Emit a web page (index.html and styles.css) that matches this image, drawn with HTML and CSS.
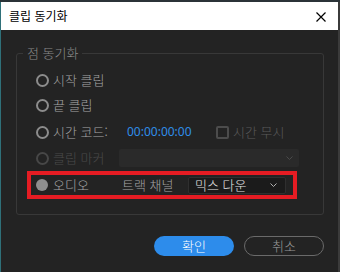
FILE: index.html
```html
<!DOCTYPE html>
<html lang="ko">
<head>
  <meta charset="UTF-8">
  <title>클립 동기화</title>
  <link rel="stylesheet" href="styles.css">
</head>
<body>
  <div class="frame">
    <div class="titlebar">
      <span class="title">클립 동기화</span>
      <svg class="close" width="10" height="10" viewBox="0 0 10 10">
        <path d="M0.5 0.5 L9.5 9.5 M9.5 0.5 L0.5 9.5" stroke="#000" stroke-width="1.2" fill="none"/>
      </svg>
    </div>

    <div class="panel">
      <fieldset class="group">
        <legend>점 동기화</legend>

        <div class="row row-first">
          <span class="radio"></span>
          <span class="label">시작 클립</span>
        </div>

        <div class="row row-end">
          <span class="radio"></span>
          <span class="label">끝 클립</span>
        </div>

        <div class="row row-time">
          <span class="radio"></span>
          <span class="label label-time">시간 코드:</span>
          <span class="timecode">00:00:00:00</span>
          <span class="checkbox"></span>
          <span class="label dim">시간 무시</span>
        </div>

        <div class="row row-marker">
          <span class="radio disabled"></span>
          <span class="label label-marker disabled">클립 마커</span>
          <div class="select select-marker">
            <svg class="chevron" width="7" height="4" viewBox="0 0 7 4">
              <polyline points="0.5,0.5 3.5,3.5 6.5,0.5" stroke="#4a4a4a" fill="none"/>
            </svg>
          </div>
        </div>

        <div class="highlight">
          <div class="row">
            <span class="radio checked"></span>
            <span class="label label-audio">오디오</span>
            <span class="label label-track">트랙 채널</span>
            <div class="select select-track">
              <span>믹스 다운</span>
              <svg class="chevron" width="7" height="4" viewBox="0 0 7 4">
                <polyline points="0.5,0.5 3.5,3.5 6.5,0.5" stroke="#b0b0b0" fill="none"/>
              </svg>
            </div>
          </div>
        </div>
      </fieldset>

      <div class="actions">
        <button class="btn btn-ok">확인</button>
        <button class="btn btn-cancel">취소</button>
      </div>
    </div>
  </div>
</body>
</html>
```

FILE: styles.css
```css
html, body {
  margin: 0;
  height: 100%;
  background-color: #2b3338;
}

body {
  font-family: "Noto Sans CJK KR", "Noto Sans", sans-serif;
  font-size: 13px;
  font-weight: 300;
  overflow: hidden;
}

.frame {
  margin-top: 2px;
  height: 270px;
  border-left: 1px solid #2f7079;
  border-right: 2px solid #3b3b3b;
  display: flex;
  flex-direction: column;
}

.titlebar {
  height: 28px;
  background-color: #fff;
  display: flex;
  align-items: center;
  justify-content: space-between;
  padding: 0 12px 0 8px;
}

.title {
  font-size: 12px;
  font-weight: 400;
  color: #000;
  line-height: 16px;
}

.close {
  margin-top: 1px;
}

.panel {
  flex: 1;
  background-color: #232323;
  padding: 15px 14px 0 15px;
}

.group {
  margin: 0;
  padding: 9px 10px 15px 10px;
  border: 1px solid #383838;
  border-radius: 3px;
  min-width: 0;
}

.group legend {
  padding: 0 4px;
  margin-left: -4px;
  color: #8c8c8c;
  line-height: 16px;
}

.row {
  height: 20px;
  display: flex;
  align-items: center;
  padding-left: 9px;
  color: #a4a4a4;
  line-height: 16px;
}

.row-end { margin-top: 5px; }
.row-time { margin-top: 7px; }
.row-marker { margin-top: 6px; }

.radio {
  width: 13px;
  height: 13px;
  box-sizing: border-box;
  border: 2px solid #8c8c8c;
  border-radius: 50%;
  margin-right: 4px;
  flex: none;
}

.radio.disabled {
  border-color: #474747;
}

.radio.checked {
  width: 12px;
  height: 12px;
  border: none;
  background-color: #8e8e8e;
  margin-right: 5px;
}

.label {
  white-space: nowrap;
}

.label.disabled {
  color: #4a4a4a;
}

.label.dim {
  color: #5a5a5a;
}

.label-time { width: 74px; }
.label-marker { width: 66px; }
.label-audio { width: 69px; }
.label-track { width: 66px; }

.timecode {
  width: 89px;
  color: #2f8ee9;
  font-family: "Noto Sans", sans-serif;
  font-size: 12px;
  font-weight: 400;
}

.checkbox {
  width: 13px;
  height: 13px;
  box-sizing: border-box;
  border: 2px solid #4c4c4c;
  border-radius: 2px;
  margin-right: 4px;
}

.select {
  display: flex;
  align-items: center;
  justify-content: space-between;
  box-sizing: border-box;
  border-radius: 2px;
}

.select-marker {
  width: 180px;
  height: 18px;
  background-color: #2a2a2a;
  justify-content: flex-end;
  padding-right: 6px;
}

.select-track {
  width: 98px;
  height: 17px;
  background-color: #1b1b1b;
  border: 1px solid #2f2f2f;
  padding: 0 8px 0 6px;
  color: #e4e4e4;
}

.highlight {
  margin-top: 3px;
  width: 270px;
  box-sizing: border-box;
  border: 4px solid #e51c23;
}

.highlight .row {
  padding-left: 5px;
}

.actions {
  display: flex;
  justify-content: flex-end;
  gap: 10px;
  margin-top: 21px;
}

.btn {
  width: 80px;
  height: 20px;
  border-radius: 10px;
  font-family: "Noto Sans CJK KR", sans-serif;
  font-size: 13px;
  font-weight: 300;
  line-height: 16px;
  padding: 0;
  box-sizing: border-box;
}

.btn-ok {
  background-color: #2d8ceb;
  color: #fff;
  border: none;
}

.btn-cancel {
  background-color: transparent;
  color: #9a9a9a;
  border: 1.5px solid #6a6a6a;
}
```
